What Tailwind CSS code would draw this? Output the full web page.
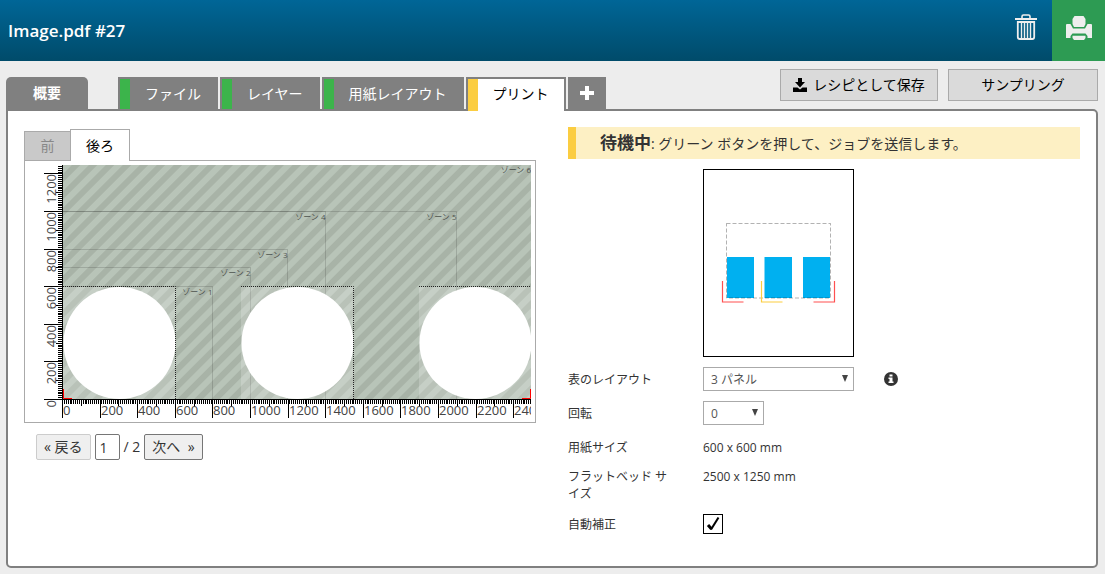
<!DOCTYPE html>
<html lang="ja">
<head>
    <meta charset="UTF-8">
    <meta name="viewport" content="width=device-width, initial-scale=1.0">
    <title>Image.pdf #27</title>
    <script src="https://cdn.jsdelivr.net/npm/@tailwindcss/browser@4"></script>
</head>
<body class="min-h-screen flex flex-col bg-[#ededed] font-['Open_Sans','Noto_Sans_CJK_JP',sans-serif] text-sm text-[#333]">
    <!-- Header -->
    <header class="flex items-stretch justify-between h-[61px] bg-linear-to-b from-[#006697] to-[#004b6a]">
        <h1 class="self-center pl-2 text-[17px] leading-6 font-semibold text-white">Image.pdf #27</h1>
        <div class="flex">
            <button type="button" aria-label="削除" class="w-[52px] flex justify-center pt-3.5">
                <svg class="w-[22px] h-[26px]" viewBox="0 0 22 26" fill="none" stroke="#eee">
                    <path d="M0 5h22" stroke-width="2"/>
                    <path d="M7 4V2.5Q7 1 8.500 1h5Q15 1 15 2.500V4" stroke-width="1.600"/>
                    <path d="M2.800 8h16.400v15q0 2-2 2H4.800q-2 0-2-2z" stroke-width="1.800"/>
                    <path d="M6.500 8v17M9.500 8v17M12.500 8v17M15.500 8v17" stroke-width="1.400"/>
                </svg>
            </button>
            <button type="button" aria-label="印刷" class="w-[53px] flex justify-center pt-4 bg-[#2d9b53]">
                <svg class="w-[26px] h-6" viewBox="0 0 26 24" fill="#eee">
                    <path d="M8.500 0h9l2 3v5l-1.500 3H8L6.500 8V3z"/>
                    <path d="M0 9q0-1 1-1h3.500l2.500 4.500h12L21.500 8H25q1 0 1 1v13h-4.500V20l-2-2.500h-13L4.500 20v2H0z"/>
                    <path d="M6.500 19.800h13V22L18 24H8l-1.500-2z"/>
                </svg>
            </button>
        </div>
    </header>

    <!-- Tabs -->
    <div class="flex items-start justify-between pl-1.5 pr-[7px]">
        <nav class="flex gap-0.5 pt-4 text-white leading-[30px]">
            <button type="button" class="w-[82px] h-8 mr-7 rounded-t-[5px] bg-[#808080] font-bold">概要</button>
            <button type="button" class="flex h-8 border-2 border-b-0 border-[#808080] bg-[#808080]"><span class="w-2.5 h-full bg-[#3cb44b]"></span><span class="px-[15px]">ファイル</span></button>
            <button type="button" class="flex h-8 border-2 border-b-0 border-[#808080] bg-[#808080]"><span class="w-2.5 h-full bg-[#3cb44b]"></span><span class="px-[15px]">レイヤー</span></button>
            <button type="button" class="flex h-8 border-2 border-b-0 border-[#808080] bg-[#808080]"><span class="w-2.5 h-full bg-[#3cb44b]"></span><span class="px-[15px]">用紙レイアウト</span></button>
            <button type="button" class="relative flex h-[34px] -mb-0.5 border-2 border-b-0 border-[#808080] bg-white text-black"><span class="w-2.5 h-full bg-[#fbcd41]"></span><span class="px-[15px]">プリント</span></button>
            <button type="button" aria-label="追加" class="w-[38px] h-8 flex items-center justify-center bg-[#808080]">
                <svg class="w-3.5 h-3.5" viewBox="0 0 14 14" stroke="#fff" stroke-width="4"><path d="M0 7h14M7 0v14"/></svg>
            </button>
        </nav>
        <div class="flex gap-2.5 mt-2 text-black">
            <button type="button" class="w-[158px] h-8 flex items-center justify-center gap-1.5 border border-[#aaa] bg-[#dadada]">
                <svg class="w-3.5 h-3.5" viewBox="0 0 14 14">
                    <path d="M5 0h4v4h3L7 9.500 2 4h3z"/>
                    <path d="M0 9.500h4.500L7 11.500l2.500-2H14V14H0z"/>
                </svg>
                レシピとして保存
            </button>
            <button type="button" class="w-[150px] h-8 border border-[#aaa] bg-[#dadada]">サンプリング</button>
        </div>
    </div>

    <!-- Panel -->
    <main class="flex-1 grid grid-cols-2 gap-8 mb-1.5 ml-1.5 mr-[7px] px-4 pt-4 border-2 border-[#808080] rounded-b-[5px] rounded-tr-[5px] bg-white">
        <!-- Preview -->
        <section class="pt-0.5">
            <div class="flex items-end">
                <button type="button" class="w-[46px] h-[29px] border border-r-0 border-b-0 border-[#aaa] bg-[#c9c9c9] text-[#888]">前</button>
                <button type="button" class="relative w-[60px] h-8 -mb-px border border-b-0 border-[#aaa] bg-white text-black">後ろ</button>
            </div>
            <div class="border border-[#aaa]">
                <svg class="block w-full h-auto" viewBox="0 0 510 261">
                    <defs>
                        <pattern id="stripes" width="12" height="12" patternUnits="userSpaceOnUse" patternTransform="rotate(45)">
                            <rect width="12" height="12" fill="#b8c4b8"/>
                            <rect width="6" height="12" fill="#a8b3a7"/>
                        </pattern>
                        <clipPath id="bed"><rect x="0" y="0" width="506" height="261"/></clipPath>
                    </defs>
                    <g clip-path="url(#bed)">
                        <rect x="38" y="4" width="468" height="234" fill="url(#stripes)"/>
                        <g id="zones" fill="none" stroke="#000" stroke-opacity="0.14"></g>
                        <g id="panels"></g>
                        <path d="M38.500 228v9.500H47M505.500 228v9.500H497" fill="none" stroke="#f00"/>
                        <g id="ruler" font-size="13" fill="#444"></g>
                    </g>
                </svg>
            </div>
            <div class="flex items-center gap-1 mt-[11px] pl-3 leading-5">
                <button type="button" class="h-[26px] px-[7px] border border-[#ccc] rounded-[2px] bg-[#efefef]">« 戻る</button>
                <input type="text" value="1" aria-label="ページ" class="w-[25px] h-[26px] pl-1 border border-[#767676] rounded-[2px] bg-white">
                <span>/ 2</span>
                <button type="button" class="h-[26px] px-[7px] border border-[#767676] rounded-[2px] bg-[#efefef] whitespace-pre">次へ  »</button>
            </div>
        </section>

        <!-- Settings -->
        <section class="text-xs">
            <p class="h-8 pl-6 border-l-8 border-[#fbcd41] bg-[#fdf0c4] text-sm leading-8"><b class="text-[17px] leading-8">待機中</b>: グリーン ボタンを押して、ジョブを送信します。</p>
            <div class="ml-[135px] mt-2.5 w-[151px] border border-black">
                <svg class="block w-full h-auto" viewBox="0 0 149 186" fill="none">
                    <path d="M23 87h27v41H23zM60.500 87h27.500v41H60.500zM99 87h27v41H99z" fill="#00b0f0"/>
                    <path d="M22.500 53.500h104v74.500h-104z" stroke="#000" stroke-opacity="0.3" stroke-dasharray="4 2"/>
                    <path d="M18.500 111v21h21M130.500 111v21h-21" stroke="#ff5050" stroke-width="1.200"/>
                    <path d="M57.500 111v21h21" stroke="#fbcd41" stroke-width="1.200"/>
                </svg>
            </div>
            <div class="flex flex-col gap-2.5 mt-2.5 leading-[17px]">
                <div class="flex items-center h-6">
                    <label for="layout" class="w-[105px] mr-[30px]">表のレイアウト</label>
                    <div class="relative">
                        <select id="layout" class="appearance-none w-[151px] h-6 pl-[7px] border border-[#aaa] bg-white text-[#555]"><option>3 パネル</option></select>
                        <svg class="absolute right-1.5 top-2 w-1.5 h-[7px] pointer-events-none" viewBox="0 0 6 7" fill="#444"><path d="M0 0h6L3 7z"/></svg>
                    </div>
                    <svg class="ml-[30px] w-3.5 h-3.5" viewBox="0 0 14 14" role="img" aria-label="情報">
                        <circle cx="7" cy="7" r="7" fill="#333"/>
                        <path d="M5.500 2.500h3v2h-3zM4.500 5.500h4v4h1v1.500h-5V9.500h1V7h-1z" fill="#fff"/>
                    </svg>
                </div>
                <div class="flex items-center h-6">
                    <label for="rotation" class="w-[105px] mr-[30px]">回転</label>
                    <div class="relative">
                        <select id="rotation" class="appearance-none w-[61px] h-6 pl-[7px] border border-[#aaa] bg-white text-[#555]"><option>0</option></select>
                        <svg class="absolute right-1.5 top-2 w-1.5 h-[7px] pointer-events-none" viewBox="0 0 6 7" fill="#444"><path d="M0 0h6L3 7z"/></svg>
                    </div>
                </div>
                <dl class="grid grid-cols-[105px_1fr] gap-x-[30px] gap-y-3 pt-1">
                    <dt>用紙サイズ</dt>
                    <dd>600 x 600 mm</dd>
                    <dt>フラットベッド サイズ</dt>
                    <dd>2500 x 1250 mm</dd>
                </dl>
                <div class="flex items-center h-6">
                    <label for="auto" class="w-[105px] mr-[30px]">自動補正</label>
                    <div class="relative w-5 h-5">
                        <input id="auto" type="checkbox" checked class="peer appearance-none block w-5 h-5 border border-black bg-white">
                        <svg class="absolute inset-0 hidden peer-checked:block pointer-events-none" viewBox="0 0 20 20" fill="none" stroke="#000"><path d="M5 11l3.500 4" stroke-width="3"/><path d="M8 15.500L15.500 3.500" stroke-width="2"/></svg>
                    </div>
                </div>
            </div>
        </section>
    </main>

    <script>
        const scale = 0.188; // pixels per mm
        const originX = 37;
        const originY = 238.55;
        const px = mm => originX + Math.round(mm * scale);
        const py = mm => Math.floor(originY - mm * scale);

        // Zones: [number, width mm, height mm]
        const zones = [[1, 800, 600], [2, 1000, 700], [3, 1200, 800], [4, 1400, 1000], [5, 2100, 1000], [6, 2500, 1250]];
        document.getElementById('zones').innerHTML = zones.map(([n, w, h]) => {
            const x = originX + Math.floor(w * scale) + 0.5;
            const y = py(h) + 0.5;
            const line = n < 6 ? `<path d="M38 ${y}H${x}V238"/>` : '';
            const right = n < 6 ? x : 506;
            return `${line}<text x="${right}" y="${y + 8}" font-size="8" text-anchor="end" stroke="none" fill="#000" fill-opacity="0.6">ゾーン ${n}</text>`;
        }).join('');

        // Printed panels
        document.getElementById('panels').innerHTML = [38, 216, 394].map(x => `
            <rect x="${x}" y="126" width="113" height="112" fill="#fff" fill-opacity="0.2"/>
            <circle cx="${x + 56.5}" cy="182" r="56" fill="#fff"/>
            <path d="M${x} 125.500h112.500V238" fill="none" stroke="#222" stroke-dasharray="1 1"/>`).join('');

        // Rulers
        let ticks = '';
        let labels = '';
        for (let mm = 0; mm <= 2500; mm += 10) {
            const x = px(mm);
            const len = mm % 200 === 0 ? 19 : mm % 100 === 0 ? 7 : 5;
            ticks += `<rect x="${x}" y="238" width="1" height="${len}"/>`;
            if (mm % 200 === 0) labels += `<text x="${x + 1}" y="254">${mm}</text>`;
        }
        for (let mm = 0; mm <= 1240; mm += 10) {
            const y = py(mm);
            const len = mm % 200 === 0 ? 19 : mm % 100 === 0 ? 7 : 5;
            ticks += `<rect x="${originX + 1 - len}" y="${y}" width="${len}" height="1"/>`;
            if (mm % 200 === 0) labels += `<text transform="translate(31 ${y + 1}) rotate(-90)" text-anchor="end">${mm}</text>`;
        }
        document.getElementById('ruler').innerHTML =
            `<g fill="#000"><rect x="37" y="4" width="1" height="236"/><rect x="37" y="238" width="469" height="1"/>${ticks}</g>${labels}`;
    </script>
</body>
</html>
